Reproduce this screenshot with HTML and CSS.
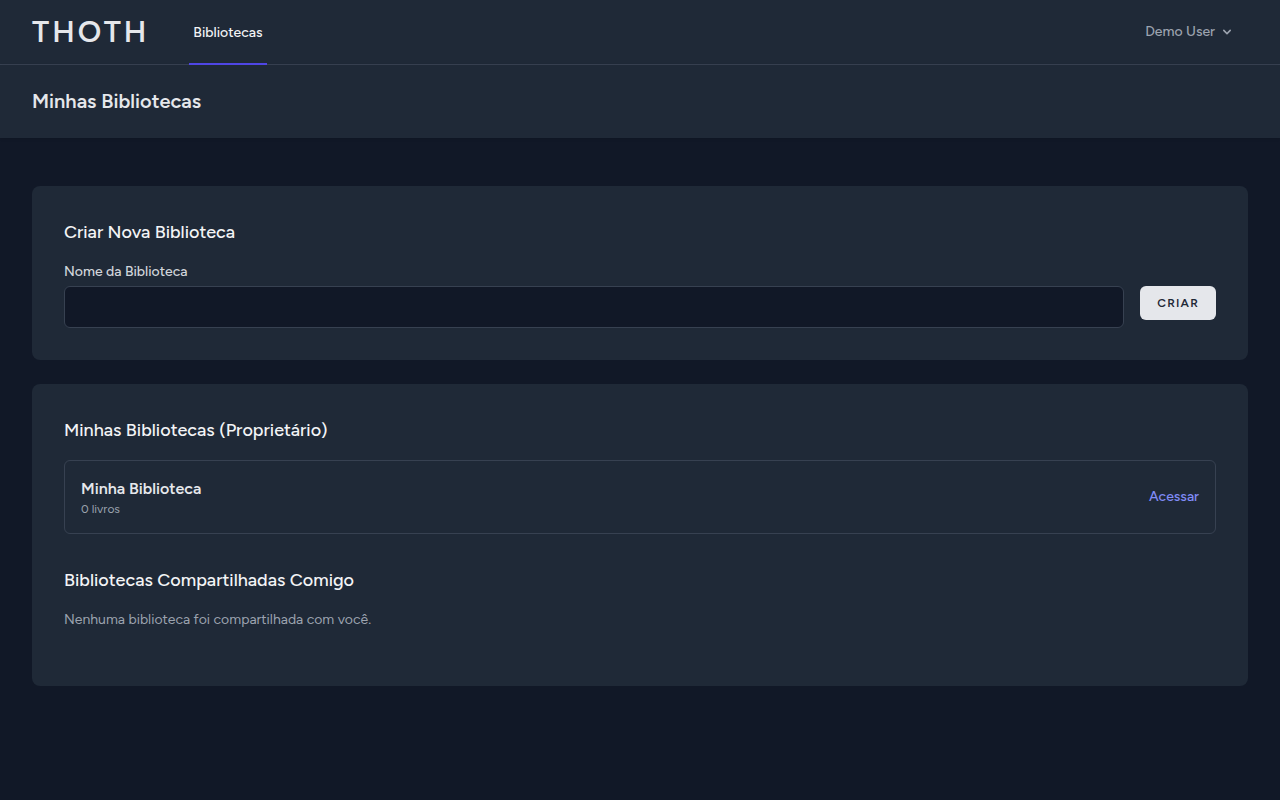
FILE: index.html
```html
<!DOCTYPE html>
<html lang="pt-BR">

<head>
    <meta charset="UTF-8">
    <meta name="viewport" content="width=device-width, initial-scale=1.0">
    <title>Minhas Bibliotecas - Thoth</title>
    <link rel="stylesheet" href="styles.css">
</head>

<body>
    <nav class="navbar">
        <a href="#" class="logo">THOTH</a>
        <a href="#" class="nav-link active">Bibliotecas</a>
        <button type="button" class="user-menu">
            Demo User
            <svg class="chevron" viewBox="0 0 20 20" fill="currentColor" aria-hidden="true">
                <path fill-rule="evenodd" clip-rule="evenodd" d="M5.293 7.293a1 1 0 011.414 0L10 10.586l3.293-3.293a1 1 0 111.414 1.414l-4 4a1 1 0 01-1.414 0l-4-4a1 1 0 010-1.414z" />
            </svg>
        </button>
    </nav>

    <header class="page-header">
        <h1>Minhas Bibliotecas</h1>
    </header>

    <main class="content">
        <section class="card">
            <h2>Criar Nova Biblioteca</h2>
            <form class="create-form">
                <div class="form-group">
                    <label for="name">Nome da Biblioteca</label>
                    <input type="text" id="name" name="name" required>
                </div>
                <button type="submit" class="create-button">Criar</button>
            </form>
        </section>

        <section class="card">
            <h2>Minhas Bibliotecas (Proprietário)</h2>
            <div class="library">
                <div>
                    <h3>Minha Biblioteca</h3>
                    <p class="book-count">0 livros</p>
                </div>
                <a href="#" class="library-link">Acessar</a>
            </div>

            <h2 class="shared-title">Bibliotecas Compartilhadas Comigo</h2>
            <p class="empty-message">Nenhuma biblioteca foi compartilhada com você.</p>
        </section>
    </main>
</body>

</html>
```

FILE: styles.css
```css
* {
    box-sizing: border-box;
}

body {
    margin: 0;
    min-height: 100vh;
    background-color: #111827;
    color: #f3f4f6;
    font-family: Figtree, Lato, "Noto Sans", sans-serif;
    font-size: 14px;
    line-height: 20px;
}

h1,
h2,
h3,
p {
    margin: 0;
}

a {
    text-decoration: none;
}

button,
input {
    font-family: inherit;
}

.navbar {
    display: flex;
    align-items: center;
    height: 65px;
    padding: 0 32px;
    background-color: #1f2937;
    border-bottom: 1px solid #374151;
}

.logo {
    color: #e5e7eb;
    font-size: 30px;
    line-height: 36px;
    font-weight: 600;
    letter-spacing: 0.1em;
}

.nav-link {
    display: flex;
    align-items: center;
    align-self: stretch;
    margin: 0 0 -1px 40px;
    padding: 2px 4px 0;
    border-bottom: 2px solid transparent;
    color: #9ca3af;
    font-weight: 500;
}

.nav-link.active {
    border-color: #4f46e5;
    color: #f3f4f6;
}

.user-menu {
    display: flex;
    align-items: center;
    gap: 4px;
    margin-left: auto;
    padding: 8px 13px;
    border: 0;
    background: none;
    color: #9ca3af;
    font-size: 14px;
    line-height: 16px;
    font-weight: 500;
    cursor: pointer;
}

.chevron {
    width: 16px;
    height: 16px;
}

.page-header {
    padding: 24px 32px;
    background-color: #1f2937;
    box-shadow: 0 1px 3px rgba(0, 0, 0, 0.1);
}

.page-header h1 {
    color: #e5e7eb;
    font-size: 20px;
    line-height: 25px;
    font-weight: 600;
}

.content {
    display: flex;
    flex-direction: column;
    gap: 24px;
    padding: 48px 32px;
}

.card {
    padding: 32px;
    background-color: #1f2937;
    border-radius: 8px;
}

.card h2 {
    margin-bottom: 16px;
    font-size: 18px;
    line-height: 28px;
    font-weight: 500;
}

.create-form {
    display: flex;
    gap: 16px;
}

.form-group {
    flex: 1;
}

.form-group label {
    display: block;
    margin-bottom: 4px;
    color: #d1d5db;
    font-weight: 500;
}

.form-group input {
    display: block;
    width: 100%;
    padding: 8px 12px;
    border: 1px solid #374151;
    border-radius: 6px;
    background-color: #111827;
    color: #d1d5db;
    font-size: 16px;
    height: 42px;
}

.create-button {
    align-self: flex-start;
    margin-top: 24px;
    padding: 8px 16px;
    border: 1px solid transparent;
    border-radius: 6px;
    background-color: #e5e7eb;
    color: #1f2937;
    font-size: 12px;
    line-height: 16px;
    font-weight: 600;
    letter-spacing: 0.1em;
    text-transform: uppercase;
    cursor: pointer;
}

.library {
    display: flex;
    align-items: center;
    justify-content: space-between;
    padding: 16px;
    border: 1px solid #374151;
    border-radius: 6px;
}

.library h3 {
    color: #e5e7eb;
    font-size: 16px;
    line-height: 24px;
    font-weight: 600;
}

.book-count {
    color: #9ca3af;
    font-size: 12px;
    line-height: 16px;
}

.library-link {
    color: #818cf8;
    font-weight: 500;
}

.card .shared-title {
    margin-top: 32px;
}

.empty-message {
    margin-bottom: 24px;
    color: #9ca3af;
}
```
